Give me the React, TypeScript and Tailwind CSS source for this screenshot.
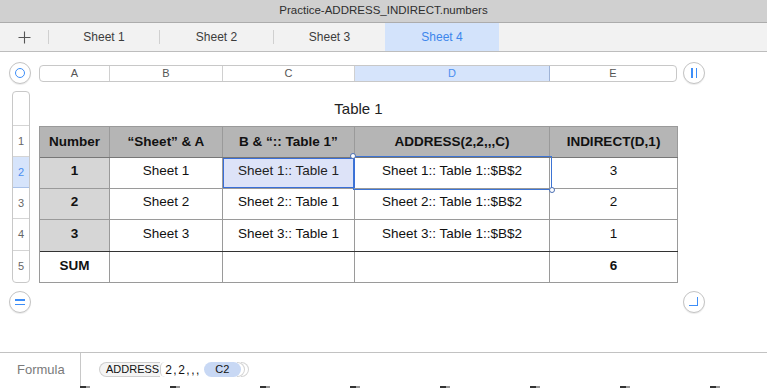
import React from 'react';

const cols = [
  { key: 'A', w: 'w-[70px]' },
  { key: 'B', w: 'w-[113px]' },
  { key: 'C', w: 'w-[132px]' },
  { key: 'D', w: 'w-[195px]' },
  { key: 'E', w: 'w-[128px]' },
];

const header = ['Number', '\u201cSheet\u201d & A', 'B & \u201c:: Table 1\u201d', 'ADDRESS(2,2,,,C)', 'INDIRECT(D,1)'];

const rows = [
  ['1', 'Sheet 1', 'Sheet 1:: Table 1', 'Sheet 1:: Table 1::$B$2', '3'],
  ['2', 'Sheet 2', 'Sheet 2:: Table 1', 'Sheet 2:: Table 1::$B$2', '2'],
  ['3', 'Sheet 3', 'Sheet 3:: Table 1', 'Sheet 3:: Table 1::$B$2', '1'],
];

function RoundButton({ children }: { children: React.ReactNode }) {
  return (
    <div className="flex h-[22px] w-[22px] shrink-0 items-center justify-center rounded-full border border-[#c4c4c4] bg-white shadow-[0_1px_1px_rgba(0,0,0,0.08)]">
      {children}
    </div>
  );
}

export default function App() {
  return (
    <div className="flex h-[388px] w-[767px] flex-col overflow-hidden bg-white font-['Liberation_Sans',Arial,sans-serif] text-[#111]">
      <div className="flex h-[386px] flex-col overflow-hidden rounded-bl-[5px] bg-white">
        {/* title bar */}
        <div className="flex h-[23px] shrink-0 items-center justify-center border-b border-[#acacac] bg-[#d0d0d0] text-[11.5px] text-[#2e2e2e]">
          Practice-ADDRESS_INDIRECT.numbers
        </div>

        {/* sheet tabs */}
        <div className="flex h-[29px] shrink-0 items-stretch border-b border-[#bdbdbd] bg-[#f2f2f2] text-[12px] text-[#3c3c3c]">
          <div className="flex w-[48px] items-center justify-center">
            <svg width="13" height="13" viewBox="0 0 13 13">
              <path d="M6.5 0.5v12M0.5 6.5h12" stroke="#555" strokeWidth="1.1" />
            </svg>
          </div>
          <div className="my-[7px] w-px bg-[#d0d0d0]" />
          <div className="flex w-[110px] items-center justify-center">Sheet 1</div>
          <div className="my-[7px] w-px bg-[#d0d0d0]" />
          <div className="flex w-[113px] items-center justify-center">Sheet 2</div>
          <div className="my-[7px] w-px bg-[#d0d0d0]" />
          <div className="flex w-[111px] items-center justify-center">Sheet 3</div>
          <div className="flex w-[114px] items-center justify-center bg-[#d3e3fb] text-[#3d86ec]">Sheet 4</div>
        </div>

        {/* canvas */}
        <div className="relative flex h-[300px] shrink-0 flex-col">
          {/* column header row */}
          <div className="mt-[10px] flex items-center pl-[9px]">
            <RoundButton>
              <div className="h-[10px] w-[10px] rounded-full border-[1.5px] border-[#3d8ef8]" />
            </RoundButton>
            <div className="ml-[8px] flex h-[17px] w-[638px] overflow-hidden rounded-[4px] border border-[#c8c8c8] text-[11px] text-[#555]">
              <div className="flex w-[70px] items-center justify-center border-r border-[#d0d0d0]">A</div>
              <div className="flex w-[113px] items-center justify-center border-r border-[#d0d0d0]">B</div>
              <div className="flex w-[132px] items-center justify-center border-r border-[#d0d0d0]">C</div>
              <div className="flex w-[195px] items-center justify-center border-r border-[#9fb3d6] bg-[#d6e4fb] text-[#4a8ef0]">D</div>
              <div className="flex flex-1 items-center justify-center">E</div>
            </div>
            <div className="ml-[6px]">
              <RoundButton>
                <div className="flex gap-[3px]">
                  <div className="h-[10px] w-[1.5px] bg-[#3d8ef8]" />
                  <div className="h-[10px] w-[1.5px] bg-[#3d8ef8]" />
                </div>
              </RoundButton>
            </div>
          </div>

          {/* body */}
          <div className="mt-[7px] flex pl-[12px]">
            <div className="flex w-[18px] flex-col overflow-hidden rounded-[4px] border border-[#c8c8c8] text-[11px] text-[#666]">
              <div className="h-[34px] border-b border-[#d4d4d4]" />
              <div className="flex h-[31px] items-center justify-center border-b border-[#d4d4d4]">1</div>
              <div className="flex h-[31px] items-center justify-center border-b border-[#a9c1e8] bg-[#d6e4fb] text-[#4a8ef0]">2</div>
              <div className="flex h-[31px] items-center justify-center border-b border-[#d4d4d4]">3</div>
              <div className="flex h-[32px] items-center justify-center border-b border-[#d4d4d4]">4</div>
              <div className="flex h-[30px] items-center justify-center">5</div>
            </div>

            <div className="ml-[9px] flex flex-col">
              <div className="flex h-[35px] items-center justify-center pt-[2px] text-[15px] text-[#222]">Table 1</div>
              <div className="relative flex flex-col border-l border-t border-[#9a9a9a] text-[13.5px]">
                {/* header row */}
                <div className="flex h-[31px] border-b border-[#777]">
                  {header.map((h, i) => (
                    <div
                      key={h}
                      className={`${cols[i].w} flex items-center justify-center border-r border-[#9a9a9a] bg-[#b5b5b5] font-bold`}
                    >
                      {h}
                    </div>
                  ))}
                </div>
                {rows.map((r, ri) => (
                  <div key={ri} className={`flex ${ri === 2 ? 'h-[32px] border-b border-[#333]' : 'h-[31px] border-b border-[#9a9a9a]'}`}>
                    {r.map((c, ci) => (
                      <div
                        key={ci}
                        className={`${cols[ci].w} flex items-center justify-center border-r pb-[3px] ${
                          ci === 0 ? 'border-[#9a9a9a] bg-[#d6d6d6] font-bold' : 'border-[#9a9a9a]'
                        } ${ri === 0 && ci === 2 ? 'bg-[#dde3f8] text-[#222] outline outline-[1.5px] -outline-offset-1 outline-[#3a6fd8]' : ''}`}
                      >
                        {c}
                      </div>
                    ))}
                  </div>
                ))}
                <div className="flex h-[31px] border-b border-[#9a9a9a]">
                  <div className="flex w-[70px] items-center justify-center border-r border-[#9a9a9a] pb-[2px] font-bold">SUM</div>
                  <div className="w-[113px] border-r border-[#9a9a9a]" />
                  <div className="w-[132px] border-r border-[#9a9a9a]" />
                  <div className="w-[195px] border-r border-[#9a9a9a]" />
                  <div className="flex w-[128px] items-center justify-center border-r border-[#9a9a9a] pb-[2px] font-bold">6</div>
                </div>

                {/* selection outline on D2 */}
                <div className="pointer-events-none absolute left-[313px] top-[29px] h-[34px] w-[199px] border border-[#3d74d4]" />
                <div className="pointer-events-none absolute left-[310px] top-[26px] h-[6px] w-[6px] rounded-full border border-[#4b6fb3] bg-white" />
                <div className="pointer-events-none absolute left-[509px] top-[60px] h-[6px] w-[6px] rounded-full border border-[#4b6fb3] bg-white" />
              </div>
            </div>
          </div>

          {/* bottom controls */}
          <div className="mt-[8px] flex items-center pl-[9px]">
            <RoundButton>
              <div className="flex flex-col gap-[3px]">
                <div className="h-[1.5px] w-[10px] bg-[#3d8ef8]" />
                <div className="h-[1.5px] w-[10px] bg-[#3d8ef8]" />
              </div>
            </RoundButton>
            <div className="ml-[652px]">
              <RoundButton>
                <div className="ml-[-2px] mt-[-2px] h-[9px] w-[9px] border-b-[1.5px] border-r-[1.5px] border-[#3d8ef8]" />
              </RoundButton>
            </div>
          </div>
        </div>

        {/* formula bar */}
        <div className="flex flex-1 border-t border-[#c2c2c2]">
          <div className="flex w-[80px] items-center pl-[17px] text-[13px] text-[#7a7a7a]">Formula</div>
          <div className="w-px bg-[#c8c8c8]" />
          <div className="flex items-center pl-[18px] text-[11px] text-[#111]">
            <div className="flex h-[15px] items-center rounded-l-full border border-r-0 border-[#cfcfcf] bg-[#f4f4f4] pl-[6px] pr-[1px]">
              ADDRESS
            </div>
            <div className="h-[15px] w-[5px] rounded-l-full border-l border-[#cfcfcf]" />
            <div className="mr-[3px] text-[12px] tracking-[1.5px]">2,2,,,</div>
            <div className="flex h-[15px] w-[37px] items-center justify-center rounded-full bg-[#c8d8f4]">C2</div>
            <div className="ml-[-4px] h-[15px] w-[8px] rounded-r-full border border-l-0 border-[#d4d4d4]" />
            <div className="ml-[-4px] h-[15px] w-[8px] rounded-r-full border border-l-0 border-[#d4d4d4]" />
          </div>
        </div>
      </div>
      <div className="h-[2px] bg-[repeating-linear-gradient(90deg,#fff_0,#fff_80px,#333_80px,#333_86px,#999_86px,#999_90px)]" />
    </div>
  );
}
